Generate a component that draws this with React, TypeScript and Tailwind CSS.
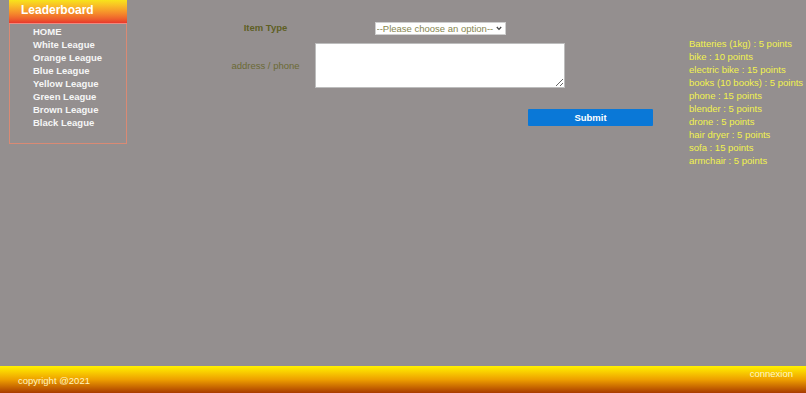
import React from "react";

const nav = [
  "HOME",
  "White League",
  "Orange League",
  "Blue League",
  "Yellow League",
  "Green League",
  "Brown League",
  "Black League",
];

const points = [
  "Batteries (1kg) : 5 points",
  "bike : 10 points",
  "electric bike : 15 points",
  "books (10 books) : 5 points",
  "phone : 15 points",
  "blender : 5 points",
  "drone : 5 points",
  "hair dryer : 5 points",
  "sofa : 15 points",
  "armchair : 5 points",
];

export default function App() {
  return (
    <div
      className="w-[806px] h-[393px] flex flex-col overflow-hidden bg-[#948f8f]"
      style={{ fontFamily: '"Liberation Sans", Arial, sans-serif' }}
    >
      <div className="flex-1 flex items-start">
        {/* Sidebar */}
        <div className="ml-[9px] w-[118px] h-[144px] border border-[#d98a74] border-t-0 flex flex-col">
          <div className="h-[24px] bg-gradient-to-b from-[#f7e41a] to-[#e8382c] border-b border-[#f08a80] -mx-px">
            <div className="pl-[12px] pt-[2px] text-[12px] font-bold text-white leading-[16px]">
              Leaderboard
            </div>
          </div>
          <ul className="pl-[23px] pt-[1px] flex flex-col">
            {nav.map((n) => (
              <li key={n} className="text-[9.5px] font-bold text-[#f6f6f6] leading-[13px]">
                {n}
              </li>
            ))}
          </ul>
        </div>

        {/* Form */}
        <div className="ml-[89px] mt-[22px] w-[437px] flex flex-col">
          <div className="flex items-center">
            <div className="w-[99px] text-center text-[9.5px] font-bold text-[#5f5f25] leading-[13px] -mt-[3px]">
              Item Type
            </div>
            <div className="w-[250px] flex justify-center">
              <div className="relative w-[131px] h-[13px]">
                <select className="block appearance-none w-full h-[13px] bg-white text-[9.5px] leading-[11px] text-[#85854f] border border-[#cfcfcf] py-0 pl-[1px] pr-0">
                  <option>--Please choose an option--</option>
                </select>
                <svg
                  className="absolute right-[4px] top-[4px] pointer-events-none"
                  width="6"
                  height="5"
                  viewBox="0 0 6 5"
                >
                  <path d="M0.8 1 L3 3.4 L5.2 1" fill="none" stroke="#444" strokeWidth="1.3" />
                </svg>
              </div>
            </div>
          </div>
          <div className="flex items-center mt-[8px]">
            <div className="w-[99px] text-center text-[9.5px] text-[#6b6a35] leading-[13px]">
              address / phone
            </div>
            <textarea className="block w-[250px] h-[45px] bg-white border border-[#bdbdbd] resize" />
          </div>
          <div className="flex justify-end mt-[21px]">
            <button className="w-[125px] h-[17px] bg-[#0a78d7] text-white text-[9.5px] font-bold leading-[17px] text-center rounded-[1px]">
              Submit
            </button>
          </div>
        </div>

        {/* Points list */}
        <ul className="ml-[36px] mt-[37px] flex flex-col whitespace-nowrap">
          {points.map((p) => (
            <li key={p} className="text-[9.5px] leading-[13px] text-[#f2f24e]">
              {p}
            </li>
          ))}
        </ul>
      </div>

      {/* Footer */}
      <div className="h-[27px] bg-gradient-to-b from-[#fff200] via-[#eea000] to-[#a83a00] flex items-start justify-between">
        <div className="ml-[18px] mt-[9px] text-[9.5px] leading-[12px] text-[#fff6c0]">
          copyright @2021
        </div>
        <div className="mr-[13px] mt-[2px] text-[9.5px] leading-[12px] text-[#fff8c8]">
          connexion
        </div>
      </div>
    </div>
  );
}
